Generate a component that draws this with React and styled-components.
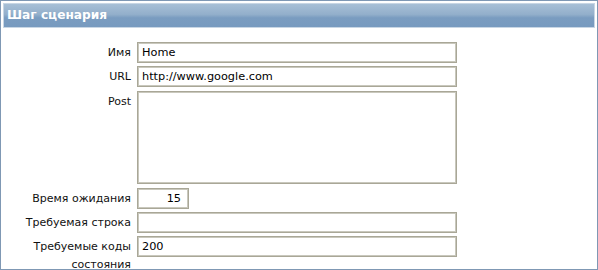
import React from "react";
import styled, { createGlobalStyle } from "styled-components";

const Global = createGlobalStyle`
  html, body {
    margin: 0;
    padding: 0;
    background: #fff;
  }
`;

const Frame = styled.div`
  width: 598px;
  height: 270px;
  box-sizing: border-box;
  border: 1px solid #7f98b4;
  padding: 2px;
  overflow: hidden;
  font-family: "DejaVu Sans", Verdana, sans-serif;
`;

const Header = styled.div`
  height: 25px;
  box-sizing: border-box;
  border: 1px solid #c8d6e4;
  background: linear-gradient(to bottom, #a7bfd6 0%, #93afcb 45%, #7a9cc0 60%, #779abf 100%);
  color: #fff;
  font-weight: bold;
  font-size: 12.2px;
  line-height: 23px;
  padding-left: 3px;
`;

const Form = styled.div`
  display: grid;
  grid-template-columns: 128px 320px;
  column-gap: 6px;
  row-gap: 3px;
  margin-top: 14px;
`;

const Label = styled.div`
  text-align: right;
  font-size: 11px;
  line-height: 18px;
  padding-top: 2px;
  color: #111;
`;

const Box = styled.div`
  box-sizing: border-box;
  width: ${(p) => p.$w || "320px"};
  height: ${(p) => p.$h || "21px"};
  border: 1px solid #a9a797;
  box-shadow: inset 0 0 0 1px #c9c8bd;
  font-size: 11.3px;
  line-height: 19px;
  padding: 0 ${(p) => (p.$right ? "7px" : "4px")};
  color: #000;
  text-align: ${(p) => (p.$right ? "right" : "left")};
  margin-bottom: ${(p) => p.$mb || "0"};
`;

export default function App() {
  return (
    <>
      <Global />
      <Frame>
        <Header>Шаг сценария</Header>
        <Form>
          <Label>Имя</Label>
          <Box>Home</Box>
          <Label>URL</Label>
          <Box $mb="1px">http://www.google.com</Box>
          <Label>Post</Label>
          <Box $h="93px" $mb="1px" />
          <Label>Время ожидания</Label>
          <Box $w="52px" $right>15</Box>
          <Label>Требуемая строка</Label>
          <Box />
          <Label>Требуемые коды состояния</Label>
          <Box>200</Box>
        </Form>
      </Frame>
    </>
  );
}
